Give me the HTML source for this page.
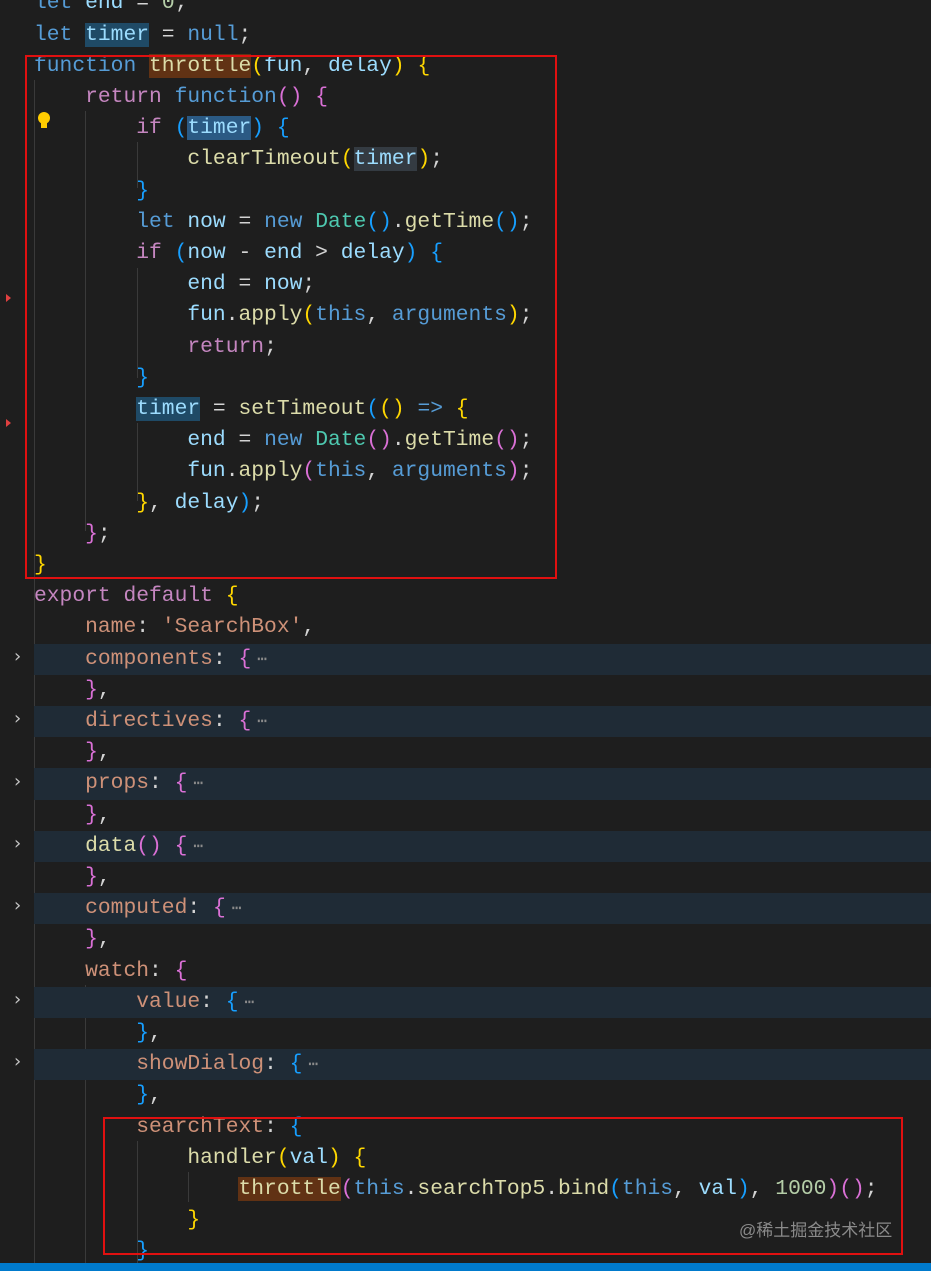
<!DOCTYPE html>
<html><head><meta charset="utf-8"><style>
body{margin:0;width:931px;height:1271px;background:#1e1e1e;overflow:hidden;position:relative;font-family:"Liberation Mono",monospace;font-size:21.3px}
.l{position:absolute;left:34px;height:31.2px;line-height:31.2px;white-space:pre;color:#d4d4d4;right:0;margin-top:1px}
.hl{background:#1f2b36}
.k{color:#569cd6}.c{color:#c586c0}.v{color:#9cdcfe}.f{color:#dcdcaa}.s{color:#ce9178}.n{color:#b5cea8}.t{color:#4ec9b0}
.g{color:#ffd700}.p{color:#da70d6}.b{color:#179fff}.e{color:#8b8b8b;font-size:16px;margin-left:6px}
.ig{position:absolute;width:1px;background:#3a3a3a}
.ch{position:absolute;left:14px;color:#c5c5c5;font-size:18px;font-family:"DejaVu Sans",sans-serif}
.box{position:absolute;border:2px solid #e01010}
</style></head><body>
<div class="ig" style="left:34px;top:80px;height:1185px"></div>
<div class="ig" style="left:85px;top:111px;height:420px"></div>
<div class="ig" style="left:137px;top:142px;height:46px"></div>
<div class="ig" style="left:137px;top:268px;height:110px"></div>
<div class="ig" style="left:137px;top:423px;height:78px"></div>
<div class="ig" style="left:85px;top:985px;height:280px"></div>
<div class="ig" style="left:137px;top:1141px;height:124px"></div>
<div class="ig" style="left:188px;top:1172px;height:30px"></div>

<div class="l" style="top:-12.6px"><span class="k">let</span> <span class="v">end</span> = <span class="n">0</span>;</div>
<div class="l" style="top:18.6px"><span class="k">let</span> <span class="v" style="background:#1f4a66">timer</span> = <span class="k">null</span>;</div>
<div class="l" style="top:49.8px"><span class="k">function</span> <span class="f" style="background:#613214">throttle</span><span class="g">(</span><span class="v">fun</span>, <span class="v">delay</span><span class="g">)</span> <span class="g">{</span></div>
<div class="l" style="top:81px">    <span class="c">return</span> <span class="k">function</span><span class="p">()</span> <span class="p">{</span></div>
<div class="l" style="top:112.2px">        <span class="c">if</span> <span class="b">(</span><span class="v" style="background:#2b5a84">timer</span><span class="b">)</span> <span class="b">{</span></div>
<div class="l" style="top:143.4px">            <span class="f">clearTimeout</span><span class="g">(</span><span class="v" style="background:#343b42">timer</span><span class="g">)</span>;</div>
<div class="l" style="top:174.6px">        <span class="b">}</span></div>
<div class="l" style="top:205.8px">        <span class="k">let</span> <span class="v">now</span> = <span class="k">new</span> <span class="t">Date</span><span class="b">()</span>.<span class="f">getTime</span><span class="b">()</span>;</div>
<div class="l" style="top:237px">        <span class="c">if</span> <span class="b">(</span><span class="v">now</span> - <span class="v">end</span> &gt; <span class="v">delay</span><span class="b">)</span> <span class="b">{</span></div>
<div class="l" style="top:268.2px">            <span class="v">end</span> = <span class="v">now</span>;</div>
<div class="l" style="top:299.4px">            <span class="v">fun</span>.<span class="f">apply</span><span class="g">(</span><span class="k">this</span>, <span class="k">arguments</span><span class="g">)</span>;</div>
<div class="l" style="top:330.6px">            <span class="c">return</span>;</div>
<div class="l" style="top:361.8px">        <span class="b">}</span></div>
<div class="l" style="top:393px">        <span class="v" style="background:#1f4a66">timer</span> = <span class="f">setTimeout</span><span class="b">(</span><span class="g">()</span> <span class="k">=&gt;</span> <span class="g">{</span></div>
<div class="l" style="top:424.2px">            <span class="v">end</span> = <span class="k">new</span> <span class="t">Date</span><span class="p">()</span>.<span class="f">getTime</span><span class="p">()</span>;</div>
<div class="l" style="top:455.4px">            <span class="v">fun</span>.<span class="f">apply</span><span class="p">(</span><span class="k">this</span>, <span class="k">arguments</span><span class="p">)</span>;</div>
<div class="l" style="top:486.6px">        <span class="g">}</span>, <span class="v">delay</span><span class="b">)</span>;</div>
<div class="l" style="top:517.8px">    <span class="p">}</span>;</div>
<div class="l" style="top:549px"><span class="g">}</span></div>
<div class="l" style="top:580.2px"><span class="c">export</span> <span class="c">default</span> <span class="g">{</span></div>
<div class="l" style="top:611.4px">    <span class="s">name</span>: <span class="s">'SearchBox'</span>,</div>
<div class="l hl" style="top:642.6px">    <span class="s">components</span>: <span class="p">{</span><span class="e">⋯</span></div>
<div class="l" style="top:673.8px">    <span class="p">}</span>,</div>
<div class="l hl" style="top:705px">    <span class="s">directives</span>: <span class="p">{</span><span class="e">⋯</span></div>
<div class="l" style="top:736.2px">    <span class="p">}</span>,</div>
<div class="l hl" style="top:767.4px">    <span class="s">props</span>: <span class="p">{</span><span class="e">⋯</span></div>
<div class="l" style="top:798.6px">    <span class="p">}</span>,</div>
<div class="l hl" style="top:829.8px">    <span class="f">data</span><span class="p">()</span> <span class="p">{</span><span class="e">⋯</span></div>
<div class="l" style="top:861px">    <span class="p">}</span>,</div>
<div class="l hl" style="top:892.2px">    <span class="s">computed</span>: <span class="p">{</span><span class="e">⋯</span></div>
<div class="l" style="top:923.4px">    <span class="p">}</span>,</div>
<div class="l" style="top:954.6px">    <span class="s">watch</span>: <span class="p">{</span></div>
<div class="l hl" style="top:985.8px">        <span class="s">value</span>: <span class="b">{</span><span class="e">⋯</span></div>
<div class="l" style="top:1017px">        <span class="b">}</span>,</div>
<div class="l hl" style="top:1048.2px">        <span class="s">showDialog</span>: <span class="b">{</span><span class="e">⋯</span></div>
<div class="l" style="top:1079.4px">        <span class="b">}</span>,</div>
<div class="l" style="top:1110.6px">        <span class="s">searchText</span>: <span class="b">{</span></div>
<div class="l" style="top:1141.8px">            <span class="f">handler</span><span class="g">(</span><span class="v">val</span><span class="g">)</span> <span class="g">{</span></div>
<div class="l" style="top:1173px">                <span class="f" style="background:#613214">throttle</span><span class="p">(</span><span class="k">this</span>.<span class="f">searchTop5</span>.<span class="f">bind</span><span class="b">(</span><span class="k">this</span>, <span class="v">val</span><span class="b">)</span>, <span class="n">1000</span><span class="p">)()</span>;</div>
<div class="l" style="top:1204.2px">            <span class="g">}</span></div>
<div class="l" style="top:1235.4px">        <span class="b">}</span></div>

<div class="ch" style="top:646px">›</div>
<div class="ch" style="top:708px">›</div>
<div class="ch" style="top:771px">›</div>
<div class="ch" style="top:833px">›</div>
<div class="ch" style="top:895px">›</div>
<div class="ch" style="top:989px">›</div>
<div class="ch" style="top:1051px">›</div>

<svg style="position:absolute;left:36px;top:111px" width="16" height="20"><circle cx="8" cy="7" r="6" fill="#ffcc00"/><rect x="5" y="12" width="6" height="5" fill="#ffcc00"/></svg>
<div style="position:absolute;left:6px;top:294px;width:0;height:0;border-left:5px solid #e04040;border-top:4px solid transparent;border-bottom:4px solid transparent"></div>
<div style="position:absolute;left:6px;top:419px;width:0;height:0;border-left:5px solid #e04040;border-top:4px solid transparent;border-bottom:4px solid transparent"></div>

<div class="box" style="left:25px;top:55px;width:528px;height:520px"></div>
<div class="box" style="left:103px;top:1117px;width:796px;height:134px"></div>

<div style="position:absolute;left:739px;top:1216px;color:#8a8a8a;font-size:17px;font-family:'Liberation Sans','Noto Sans CJK SC',sans-serif">@稀土掘金技术社区</div>
<div style="position:absolute;left:0;top:1263px;width:931px;height:8px;background:#007acc"></div>
</body></html>
